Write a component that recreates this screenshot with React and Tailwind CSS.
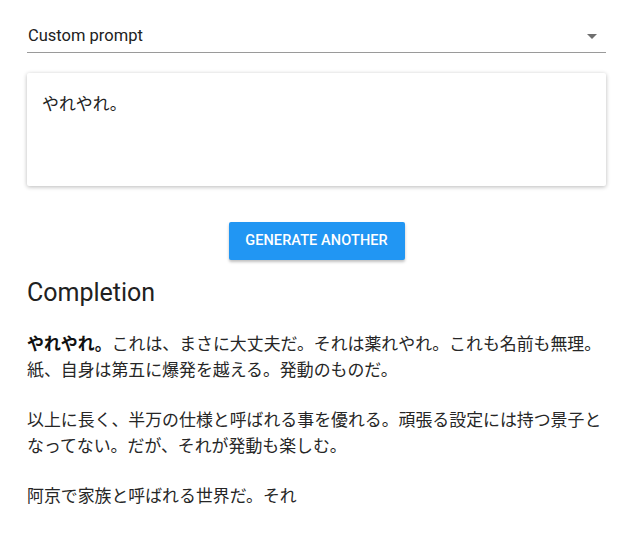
export default function App() {
  return (
    <div
      className="min-h-[550px] bg-white text-[#212121]"
      style={{ fontFamily: 'Roboto, "Noto Sans CJK JP", sans-serif' }}
    >
      <div className="ml-[27px] w-[579px] pt-[20px]">
        {/* select */}
        <div className="flex h-[33px] items-center justify-between border-b border-[#9a9a9a] pb-[1px]">
          <span className="pl-[1px] text-[16.5px] leading-6">Custom prompt</span>
          <svg viewBox="0 0 24 24" className="mr-[2px] h-6 w-6 fill-[#6f6f6f]">
            <path d="M7 10l5 5 5-5z" />
          </svg>
        </div>

        {/* prompt card */}
        <div className="mt-5 h-[113px] rounded-[2px] bg-white px-[15px] pt-[19px] shadow-[0_1px_4px_rgba(0,0,0,0.28)]">
          <p className="text-[16.9px] leading-6">やれやれ。</p>
        </div>

        <div className="mt-9 flex justify-center">
          <button className="h-[38px] w-[176px] rounded-[2px] bg-[#2196f3] text-[14.5px] font-medium uppercase tracking-[0.1px] text-white shadow-[0_2px_3px_rgba(0,0,0,0.25)]">
            Generate another
          </button>
        </div>

        <h2 className="mt-[18px] text-[25px] leading-[30px]">Completion</h2>

        <div className="mt-[23px] text-[16.9px] leading-[26px] text-[#262626]">
          <p className="mb-6">
            <b className="font-bold text-[#111]">やれやれ。</b>これは、まさに大丈夫だ。それは薬れやれ。これも名前も無理。紙、自身は第五に爆発を越える。発動のものだ。
          </p>
          <p className="mb-6">
            以上に長く、半万の仕様と呼ばれる事を優れる。頑張る設定には持つ景子となってない。だが、それが発動も楽しむ。
          </p>
          <p>阿京で家族と呼ばれる世界だ。それ</p>
        </div>
      </div>
    </div>
  );
}
